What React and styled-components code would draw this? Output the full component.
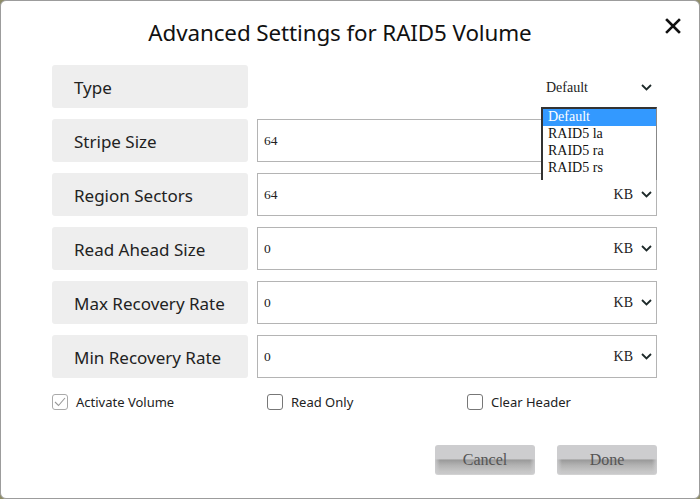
import React from "react";
import styled, { createGlobalStyle } from "styled-components";

const Global = createGlobalStyle`
  html, body { margin: 0; padding: 0; background: #8e8c68; }
  #root { width: 700px; height: 499px; }
  * { box-sizing: border-box; }
`;

const Dialog = styled.div`
  width: 700px;
  height: 499px;
  background: #fff;
  border: 1px solid #9c9c9c;
  border-radius: 6px;
  display: flex;
  flex-direction: column;
  padding: 0 42px 0 51px;
  font-family: "Noto Sans", "Open Sans", sans-serif;
  color: #1a1a1a;
`;

const Header = styled.div`
  position: relative;
  height: 64px;
  display: flex;
  align-items: center;
  justify-content: center;
  padding-bottom: 2px;
`;

const Title = styled.h1`
  margin: 0 0 0 -29px;
  font-size: 22.4px;
  font-weight: 400;
  letter-spacing: -0.1px;
  color: #111;
`;

const Close = styled.button`
  position: absolute;
  right: -27px;
  top: 14px;
  width: 22px;
  height: 22px;
  border: none;
  background: none;
  padding: 0;
  cursor: pointer;
  display: flex;
  align-items: center;
  justify-content: center;
`;

const Form = styled.div`
  display: grid;
  grid-template-columns: 196px 400px;
  column-gap: 9px;
  row-gap: 11px;
  grid-auto-rows: 43px;
`;

const Label = styled.div`
  background: #eeeeee;
  border-radius: 3px;
  display: flex;
  align-items: center;
  padding: 1px 0 0 22px;
  font-size: 17px;
  color: #222;
`;

const Field = styled.div`
  border: 1px solid #b4b4b4;
  display: flex;
  align-items: center;
  padding: 0 4px 0 6px;
  font-family: "Liberation Serif", "Times New Roman", serif;
  font-size: 13.5px;
  color: #222;
`;

const Value = styled.span`
  flex: 1;
`;

const Unit = styled.span`
  margin-right: 8px;
  font-size: 14px;
`;

const TypeCell = styled.div`
  position: relative;
  display: flex;
  align-items: center;
  justify-content: flex-end;
`;

const TypeSelect = styled.div`
  width: 116px;
  display: flex;
  align-items: center;
  padding: 0 5px;
  font-family: "Liberation Serif", "Times New Roman", serif;
  font-size: 14px;
  color: #222;
  margin-top: 2px;
`;

const List = styled.ul`
  position: absolute;
  right: 0;
  top: 42px;
  width: 116px;
  margin: 0;
  padding: 0 0 3px;
  list-style: none;
  background: #fff;
  border-left: 2px solid #333;
  border-top: 2px solid #333;
  border-right: 1px solid #888;
  z-index: 2;
  font-family: "Liberation Serif", "Times New Roman", serif;
  font-size: 14px;
`;

const Item = styled.li`
  height: 17px;
  line-height: 16px;
  padding: 0 5px;
  color: ${(p) => (p.$selected ? "#fff" : "#111")};
  background: ${(p) => (p.$selected ? "#3399ff" : "transparent")};
`;

const Checks = styled.div`
  display: grid;
  grid-template-columns: 215px 200px 1fr;
  margin-top: 15px;
  height: 16px;
`;

const Check = styled.label`
  display: flex;
  align-items: center;
  gap: 8px;
  font-size: 13px;
  color: #222;
`;

const Box = styled.span`
  width: 16px;
  height: 16px;
  border: 1px solid ${(p) => (p.$checked ? "#aaa" : "#777")};
  border-radius: 3px;
  display: flex;
  align-items: center;
  justify-content: center;
`;

const Buttons = styled.div`
  display: flex;
  justify-content: flex-end;
  gap: 22px;
  margin-top: 36px;
`;

const Button = styled.button`
  width: 100px;
  height: 30px;
  border: none;
  border-radius: 3px;
  padding: 0;
  font-family: "Liberation Serif", "Times New Roman", serif;
  font-size: 16px;
  color: #555;
  background:
    linear-gradient(to right, rgba(205,205,207,0.9) 0, rgba(205,205,207,0) 5px, rgba(205,205,207,0) 95px, rgba(205,205,207,0.9) 100px),
    linear-gradient(to bottom, #cdcdcf 0%, #cdcdcf 46%, #9a9a9a 50%, #b3b3b3 68%, #c6c6c6 88%, #cbcbcd 100%);
  box-shadow: inset 0 -1px 0 #d2d2d2;
`;

const Chevron = () => (
  <svg width="11" height="7" viewBox="0 0 11 7">
    <path d="M1 1l4.5 4.5L10 1" fill="none" stroke="#1e2a2a" strokeWidth="1.8" />
  </svg>
);

const rows = [
  ["Stripe Size", "64", false],
  ["Region Sectors", "64", true],
  ["Read Ahead Size", "0", true],
  ["Max Recovery Rate", "0", true],
  ["Min Recovery Rate", "0", true],
];

export default function App() {
  return (
    <>
      <Global />
      <Dialog>
        <Header>
          <Title>Advanced Settings for RAID5 Volume</Title>
          <Close aria-label="close">
            <svg width="16" height="16" viewBox="0 0 16 16">
              <path d="M2 2L14 14M14 2L2 14" stroke="#111" strokeWidth="2.6" strokeLinecap="square" />
            </svg>
          </Close>
        </Header>
        <Form>
          <Label>Type</Label>
          <TypeCell>
            <TypeSelect>
              <Value>Default</Value>
              <Chevron />
            </TypeSelect>
            <List>
              <Item $selected>Default</Item>
              <Item>RAID5 la</Item>
              <Item>RAID5 ra</Item>
              <Item>RAID5 rs</Item>
            </List>
          </TypeCell>
          {rows.map(([label, value, unit]) => (
            <React.Fragment key={label}>
              <Label>{label}</Label>
              <Field>
                <Value>{value}</Value>
                {unit && (
                  <>
                    <Unit>KB</Unit>
                    <Chevron />
                  </>
                )}
              </Field>
            </React.Fragment>
          ))}
        </Form>
        <Checks>
          <Check>
            <Box $checked>
              <svg width="12" height="10" viewBox="0 0 12 10">
                <path d="M1 5l3.5 3.5L11 1" fill="none" stroke="#999" strokeWidth="1.1" />
              </svg>
            </Box>
            Activate Volume
          </Check>
          <Check>
            <Box />
            Read Only
          </Check>
          <Check>
            <Box />
            Clear Header
          </Check>
        </Checks>
        <Buttons>
          <Button>Cancel</Button>
          <Button>Done</Button>
        </Buttons>
      </Dialog>
    </>
  );
}
